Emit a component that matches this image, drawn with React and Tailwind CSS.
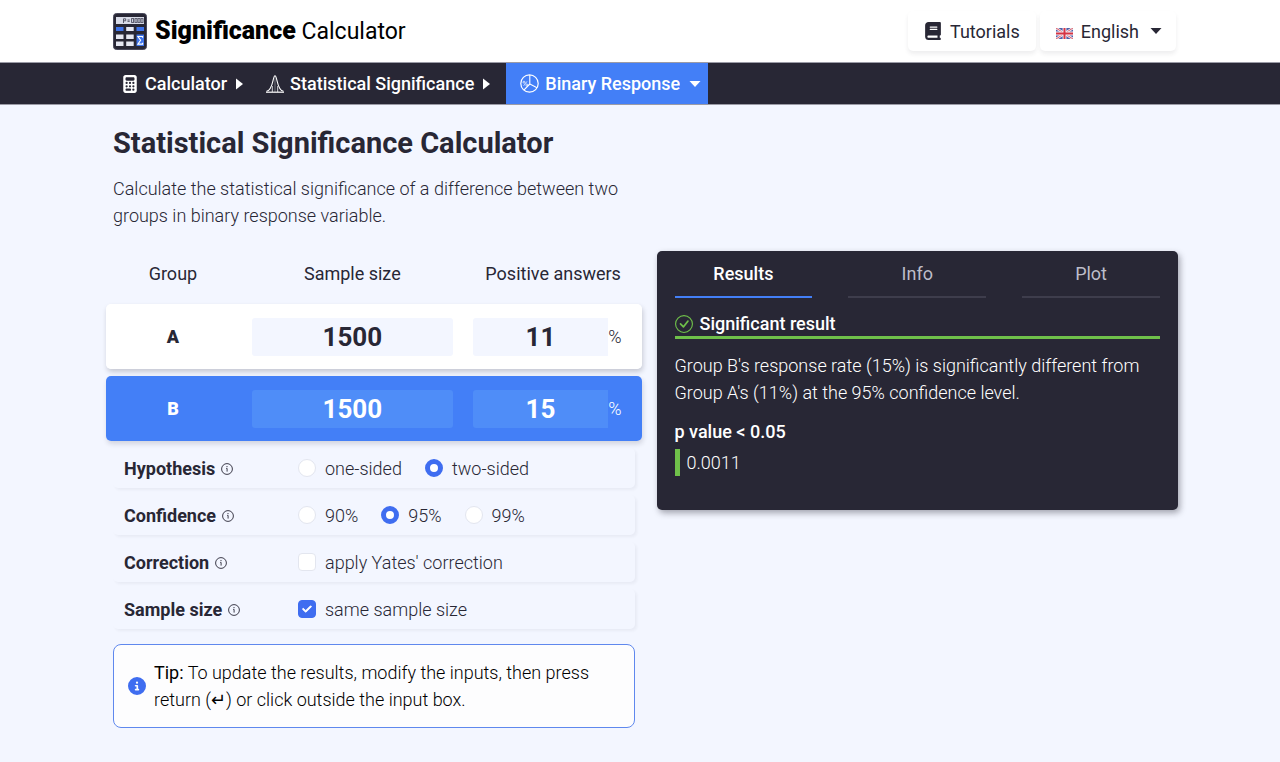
import { useState } from "react";
import { FaBook, FaCalculator, FaCheck, FaCircleInfo } from "react-icons/fa6";
import { BsCheckCircle } from "react-icons/bs";

const TABS = ["Results", "Info", "Plot"];

// Two proportion z-test, returns the p value
function getPValue(a, b, twoSided, yates) {
  const p1 = a.rate / 100;
  const p2 = b.rate / 100;
  const pooled = (a.size * p1 + b.size * p2) / (a.size + b.size);
  const spread = 1 / a.size + 1 / b.size;
  const diff = Math.max(Math.abs(p2 - p1) - (yates ? spread / 2 : 0), 0);
  const z = diff / Math.sqrt(pooled * (1 - pooled) * spread);
  const t = 1 / (1 + 0.2316419 * z);
  const poly =
    t * (0.31938153 + t * (-0.356563782 + t * (1.781477937 + t * (-1.821255978 + t * 1.330274429))));
  const tail = (Math.exp((-z * z) / 2) / Math.sqrt(2 * Math.PI)) * poly;
  return twoSided ? tail * 2 : tail;
}

function Logo() {
  return (
    <svg viewBox="0 0 34 37" className="w-[34px] h-[37px]" aria-hidden="true">
      <rect x="0.5" y="0.5" width="33" height="36" rx="3" fill="#282735" stroke="#4a4a5c" />
      <rect x="3" y="4" width="28" height="7" fill="#d9dce8" />
      <g stroke="#4b4b5c" fill="none" strokeWidth="0.9">
        <path d="M10.5 10V5.8h2.2v2h-2.2M14.5 7h2.2M14.5 8.4h2.2" />
        <rect x="18.6" y="5.6" width="2" height="3.8" />
        <rect x="22" y="5.6" width="2" height="3.8" />
        <rect x="25" y="5.6" width="2" height="3.8" />
        <rect x="28" y="5.6" width="2" height="3.8" />
      </g>
      <g fill="#3f74ea">
        <rect x="3" y="14" width="7.5" height="4" />
        <rect x="23.5" y="14" width="7.5" height="4" />
        <rect x="23.5" y="21.5" width="7.5" height="11.5" />
      </g>
      <g fill="#e6e8f2">
        <rect x="13.2" y="14" width="7.500" height="4" />
        <rect x="3" y="21.500" width="7.500" height="4.500" />
        <rect x="13.2" y="21.500" width="7.500" height="4.500" />
        <rect x="3" y="28.500" width="7.500" height="4.500" />
        <rect x="13.2" y="28.500" width="7.500" height="4.500" />
      </g>
      <path
        d="M29.600 24.800v-1.300h-4.700l2.700 3.800-2.700 3.800h4.700v-1.300"
        fill="none"
        stroke="#fff"
        strokeWidth="1.100"
      />
    </svg>
  );
}

function Flag() {
  return (
    <svg viewBox="0 0 17 11" className="w-[17px] h-[11px] mt-1" aria-hidden="true">
      <rect width="17" height="11" fill="#4d5fa8" />
      <path d="M0 0l17 11M17 0L0 11" stroke="#f3eef4" strokeWidth="2.4" />
      <path d="M0 0l17 11M17 0L0 11" stroke="#d84a56" strokeWidth="0.9" />
      <path d="M8.5 0v11M0 5.5h17" stroke="#f3eef4" strokeWidth="3.8" />
      <path d="M8.5 0v11M0 5.5h17" stroke="#d63444" strokeWidth="2" />
    </svg>
  );
}

function BellCurve() {
  return (
    <svg viewBox="0 0 18 18" className="w-[18px] h-[18px]" fill="none" stroke="currentColor" aria-hidden="true">
      <path d="M0.500 16.200C7.200 15.800 6.600 0.800 9 0.800s1.800 15 8.500 15.400" strokeWidth="1.100" />
      <path d="M0 17.200h18" strokeWidth="1.200" />
      <path d="M6.300 11v6M11.700 11v6" strokeWidth="0.800" />
      <path d="M9 1v16" strokeWidth="0.600" strokeOpacity="0.600" />
    </svg>
  );
}

function PieIcon() {
  return (
    <svg viewBox="0 0 19 19" className="w-[19px] h-[19px]" fill="none" stroke="currentColor" aria-hidden="true">
      <circle cx="9.500" cy="9.500" r="8.700" strokeWidth="1.200" />
      <path d="M9.800 1v9l7.200 3.800M9.800 10l-6 6.200" strokeWidth="1.100" />
      <g strokeWidth="0.700">
        <circle cx="4" cy="8.200" r="1" />
        <circle cx="6.800" cy="11" r="1" />
        <path d="M7 7.400l-3.400 4.400" />
      </g>
    </svg>
  );
}

function CaretDown() {
  return (
    <svg viewBox="0 0 12 6" className="ml-[3px] w-3 h-1.5" fill="currentColor" aria-hidden="true">
      <path d="M0.500 0h11L6 6z" />
    </svg>
  );
}

function CaretRight() {
  return (
    <svg viewBox="0 0 7 12" className="ml-[3px] w-[7px] h-3" fill="currentColor" aria-hidden="true">
      <path d="M0 0.500v11L7 6z" />
    </svg>
  );
}

function InfoOutline() {
  return (
    <svg viewBox="0 0 12 12" className="mt-0.5 size-3" fill="none" stroke="currentColor" aria-hidden="true">
      <circle cx="6" cy="6" r="5.400" strokeWidth="0.900" />
      <path d="M5.200 5.400H6.100V8.600" strokeWidth="0.900" />
      <circle cx="6" cy="3.600" r="0.600" fill="currentColor" stroke="none" />
    </svg>
  );
}

function GroupRow({ name, group, onChange, active }) {
  const field = active ? "bg-[#4f8df8]" : "bg-[#f3f6ff]";
  return (
    <tr
      className={
        active
          ? "h-[65px] rounded-[5px] text-white shadow-[1px_3px_5px_rgba(40,39,53,0.16)] *:bg-[#437ff7]"
          : "h-[65px] rounded-[5px] shadow-[1px_3px_5px_rgba(40,39,53,0.22)] *:bg-white"
      }
    >
      <th scope="row" className="rounded-l-[5px] font-black">
        {name}
      </th>
      <td className="px-3">
        <input
          type="text"
          aria-label={`Group ${name} sample size`}
          className={`block w-full h-[38px] rounded-[3px] text-center text-[26px] font-bold ${field}`}
          value={group.size}
          onChange={(e) => onChange({ ...group, size: Number(e.target.value) || 0 })}
        />
      </td>
      <td className="rounded-r-[5px] pl-2 pr-5">
        <div className="flex items-center">
          <input
            type="text"
            aria-label={`Group ${name} positive answers`}
            className={`block min-w-0 grow h-[38px] rounded-l-[3px] text-center text-[26px] font-bold ${field}`}
            value={group.rate}
            onChange={(e) => onChange({ ...group, rate: Number(e.target.value) || 0 })}
          />
          <span className="font-light">%</span>
        </div>
      </td>
    </tr>
  );
}

function SettingRow({ label, children }) {
  return (
    <div
      role="group"
      aria-label={label}
      className="flex h-10 items-center rounded-[5px] pl-[11px] shadow-[2px_2px_3px_rgba(40,39,53,0.05)]"
    >
      <div className="flex w-[174px] items-center gap-1.5 font-bold">
        {label}
        <InfoOutline />
      </div>
      <div className="flex items-center gap-[23px] font-light">{children}</div>
    </div>
  );
}

function Radio({ name, label, checked, onChange }) {
  return (
    <label className="flex items-center gap-[9px]">
      <input
        type="radio"
        name={name}
        checked={checked}
        onChange={onChange}
        className="size-[18px] appearance-none rounded-full border border-[#e3e6ef] bg-white checked:border-[5px] checked:border-[#3f6df0]"
      />
      {label}
    </label>
  );
}

function Checkbox({ label, checked, onChange }) {
  return (
    <label className="relative flex items-center gap-[9px]">
      <input
        type="checkbox"
        checked={checked}
        onChange={onChange}
        className="peer size-[18px] appearance-none rounded-[4px] border border-[#e3e6ef] bg-white checked:border-[#3f6df0] checked:bg-[#3f6df0]"
      />
      <FaCheck
        className="absolute left-1 hidden size-2.5 stroke-white text-white peer-checked:block"
        strokeWidth={50}
      />
      {label}
    </label>
  );
}

export default function App() {
  const [groupA, setGroupA] = useState({ size: 1500, rate: 11 });
  const [groupB, setGroupB] = useState({ size: 1500, rate: 15 });
  const [twoSided, setTwoSided] = useState(true);
  const [confidence, setConfidence] = useState(95);
  const [yates, setYates] = useState(false);
  const [sameSize, setSameSize] = useState(true);
  const [tab, setTab] = useState("Results");

  const updateGroup = (setSelf, setOther) => (group) => {
    setSelf(group);
    if (sameSize) setOther((other) => ({ ...other, size: group.size }));
  };

  const alpha = ((100 - confidence) / 100).toFixed(2);
  const pValue = getPValue(groupA, groupB, twoSided, yates);
  const significant = pValue < alpha;
  const verdict = significant ? "significantly" : "not significantly";
  const summary = `Group B's response rate (${groupB.rate}%) is ${verdict} different from Group A's (${groupA.rate}%) at the ${confidence}% confidence level.`;

  return (
    <div className="min-h-screen bg-[#f3f6ff] font-['Roboto',sans-serif] text-[18px] leading-[27px] text-[#282735]">
      <header className="bg-white">
        <div className="mx-auto flex h-[62px] max-w-[1076px] items-center justify-between pl-[11px]">
          <a href="#" className="flex items-center gap-2 text-black">
            <Logo />
            <span className="text-[23px]">
              <span className="text-[25px] font-black">Significance</span> Calculator
            </span>
          </a>
          <div className="flex gap-1 pr-0.5">
            <a
              href="#tutorials"
              className="flex h-10 items-center gap-2 rounded-[5px] px-4 shadow-[0_3px_4px_rgba(40,39,53,0.08)]"
            >
              <FaBook className="size-[18px]" />
              Tutorials
            </a>
            <label className="flex h-10 items-center gap-2 rounded-[5px] pl-4 pr-3.5 shadow-[0_3px_4px_rgba(40,39,53,0.08)]">
              <Flag />
              <select aria-label="Language" className="field-sizing-content appearance-none">
                <option>English</option>
              </select>
              <CaretDown />
            </label>
          </div>
        </div>
      </header>

      <nav className="border-y border-[#9b9ba6] bg-[#282735] font-medium text-white">
        <div className="mx-auto flex h-[41px] max-w-[1076px] items-center pl-[11px]">
          <a href="#calculator" className="flex items-center gap-1.5 pl-2">
            <FaCalculator className="size-[18px]" />
            Calculator
            <CaretRight />
          </a>
          <a href="#significance" className="flex items-center gap-1.5 px-[23px] pr-4">
            <BellCurve />
            Statistical Significance
            <CaretRight />
          </a>
          <label className="flex h-full items-center gap-1.5 bg-[#437ff7] pl-3.5 pr-[7px]">
            <PieIcon />
            <select aria-label="Response type" className="field-sizing-content appearance-none">
              <option>Binary Response</option>
            </select>
            <CaretDown />
          </label>
        </div>
      </nav>

      <main className="mx-auto max-w-[1076px] pl-[11px] pt-5">
        <h1 className="text-[29px] font-bold leading-9">Statistical Significance Calculator</h1>
        <div className="grid grid-cols-2 gap-[22px]">
          <p className="mt-3.5 font-light">
            Calculate the statistical significance of a difference between two groups in binary
            response variable.
          </p>
        </div>

        <div className="mt-[22px] grid grid-cols-2 items-start gap-[22px]">
          <section>
            <div className="-mx-[7px]">
              <table className="w-full table-fixed border-separate border-spacing-x-0 border-spacing-y-[7px]">
                <thead>
                  <tr className="h-[39px] *:pb-2 *:font-normal">
                    <th scope="col" className="w-[25%]">
                      Group
                    </th>
                    <th scope="col" className="w-[42%]">
                      Sample size
                    </th>
                    <th scope="col">Positive answers</th>
                  </tr>
                </thead>
                <tbody>
                  <GroupRow name="A" group={groupA} onChange={updateGroup(setGroupA, setGroupB)} />
                  <GroupRow
                    name="B"
                    group={groupB}
                    onChange={updateGroup(setGroupB, setGroupA)}
                    active
                  />
                </tbody>
              </table>
            </div>

            {/* Test settings */}
            <div className="flex flex-col gap-[7px]">
              <SettingRow label="Hypothesis">
                <Radio
                  name="hypothesis"
                  label="one-sided"
                  checked={!twoSided}
                  onChange={() => setTwoSided(false)}
                />
                <Radio
                  name="hypothesis"
                  label="two-sided"
                  checked={twoSided}
                  onChange={() => setTwoSided(true)}
                />
              </SettingRow>
              <SettingRow label="Confidence">
                {[90, 95, 99].map((level) => (
                  <Radio
                    key={level}
                    name="confidence"
                    label={`${level}%`}
                    checked={confidence === level}
                    onChange={() => setConfidence(level)}
                  />
                ))}
              </SettingRow>
              <SettingRow label="Correction">
                <Checkbox
                  label="apply Yates' correction"
                  checked={yates}
                  onChange={() => setYates(!yates)}
                />
              </SettingRow>
              <SettingRow label="Sample size">
                <Checkbox
                  label="same sample size"
                  checked={sameSize}
                  onChange={() => setSameSize(!sameSize)}
                />
              </SettingRow>
            </div>

            {/* Tip */}
            <div className="mt-[15px] mb-8 flex items-center gap-2 rounded-lg border border-[#5f88ee] bg-[#fdfdfe] p-3.5 text-black">
              <FaCircleInfo className="size-[18px] shrink-0 text-[#3f6df0]" />
              <p className="font-light">
                <span className="font-normal">Tip:</span> To update the results, modify the inputs,
                then press return (↵) or click outside the input box.
              </p>
            </div>
          </section>

          <section className="rounded-[5px] bg-[#282735] px-[18px] pb-[34px] text-white shadow-[2px_3px_6px_rgba(40,39,53,0.4)]">
            <div role="tablist" className="grid grid-cols-3 gap-9">
              {TABS.map((name) => (
                <button
                  key={name}
                  type="button"
                  role="tab"
                  aria-selected={tab === name}
                  onClick={() => setTab(name)}
                  className={
                    tab === name
                      ? "h-[47px] border-b-2 border-[#437ff7] font-medium text-white"
                      : "h-[47px] border-b-2 border-[#3e3d4c] text-[#bdbdc9]"
                  }
                >
                  {name}
                </button>
              ))}
            </div>
            <h2
              className={
                significant
                  ? "mt-3.5 flex items-center gap-[7px] border-b-[3px] border-[#6fc04a] font-medium leading-6 text-white"
                  : "mt-3.5 flex items-center gap-[7px] border-b-[3px] border-[#8b8b98] font-medium leading-6 text-white"
              }
            >
              <BsCheckCircle className="size-[18px] text-[#6fc04a]" />
              {significant ? "Significant result" : "Not significant result"}
            </h2>
            <p className="mt-[13px] font-light">{summary}</p>
            <p className="mt-3 font-medium">{`p value < ${alpha}`}</p>
            <p className="mt-1 border-l-[5px] border-[#6fc04a] pl-[7px] font-light">
              {pValue.toFixed(4)}
            </p>
          </section>
        </div>
      </main>
    </div>
  );
}
